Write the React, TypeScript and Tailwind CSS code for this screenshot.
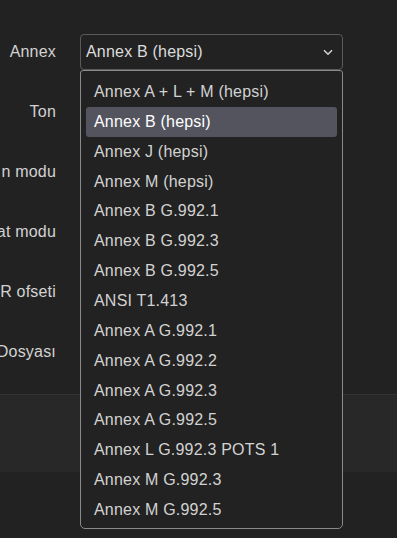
import React from "react";

// labels are clipped by the left edge in the source view; only the visible part is kept
const labels = ["Annex", "Ton", "n modu", "at modu", "R ofseti", "Dosyası"];

const options = [
  "Annex A + L + M (hepsi)",
  "Annex B (hepsi)",
  "Annex J (hepsi)",
  "Annex M (hepsi)",
  "Annex B G.992.1",
  "Annex B G.992.3",
  "Annex B G.992.5",
  "ANSI T1.413",
  "Annex A G.992.1",
  "Annex A G.992.2",
  "Annex A G.992.3",
  "Annex A G.992.5",
  "Annex L G.992.3 POTS 1",
  "Annex M G.992.3",
  "Annex M G.992.5",
];

export default function App() {
  const selected = "Annex B (hepsi)";

  return (
    <div
      className="relative w-[397px] h-[538px] overflow-hidden bg-[#222222] text-[16px] tracking-[0.2px] text-[#d2d2d2]"
      style={{ fontFamily: '"Liberation Sans", Arial, sans-serif' }}
    >
      <div className="flex flex-col gap-6 pt-[34px]">
        {labels.map((label, i) => (
          <div key={label} className="flex items-center h-9">
            <div className="w-[56px] pl-[1px] flex justify-end whitespace-nowrap">
              <span>{label}</span>
            </div>
            {i === 0 && (
              <div className="ml-6 w-[263px] h-9 flex items-center justify-between border border-[#5a5a5a] rounded-[4px] pl-[5px] pr-[9px] text-[#dcdcdc]">
                <span>{selected}</span>
                <svg width="10" height="7" viewBox="0 0 10 7" className="mt-[1px]">
                  <path d="M1 1.2 L5 5.2 L9 1.2" fill="none" stroke="#d0d0d0" strokeWidth="1.6" />
                </svg>
              </div>
            )}
          </div>
        ))}
      </div>

      <div className="mt-6 h-[78px] bg-[#282828] border-t border-[#333333]" />

      <div className="absolute left-[80px] top-[70px] w-[263px] h-[459px] border border-[#8a8a8a] rounded-b-[5px] rounded-t-[3px] bg-[#222222] px-[5px] pt-[6px]">
        {options.map((opt) => (
          <div
            key={opt}
            className={
              opt === selected
                ? "h-[29.86px] flex items-center pl-2 rounded-[3px] bg-[#54545f] text-white"
                : "h-[29.86px] flex items-center pl-2 text-[#d2d2d2]"
            }
          >
            {opt}
          </div>
        ))}
      </div>
    </div>
  );
}
